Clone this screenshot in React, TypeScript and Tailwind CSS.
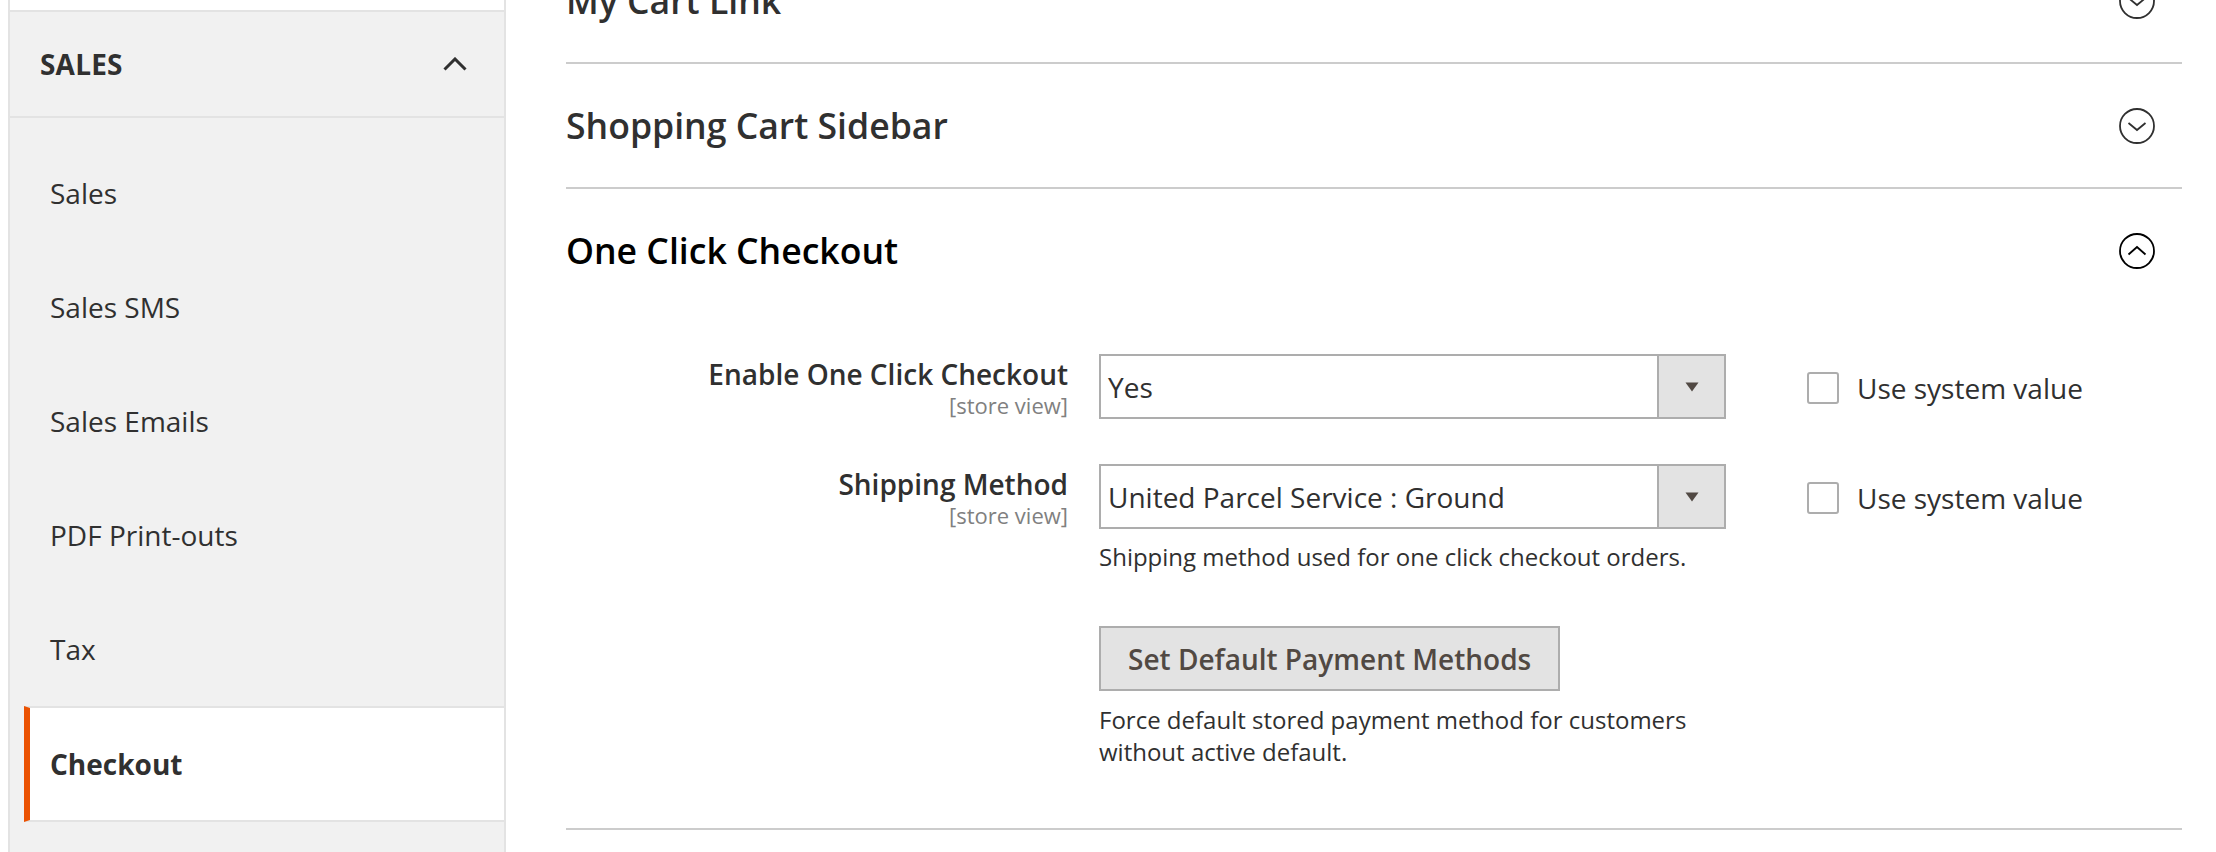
import React from "react";

const navItems = ["Sales", "Sales SMS", "Sales Emails", "PDF Print-outs", "Tax"];

function CircleChevron({ open }: { open?: boolean }) {
  const color = open ? "#000000" : "#303030";
  return (
    <svg width="36" height="36" viewBox="0 0 36 36" fill="none">
      <circle cx="18" cy="18" r="17" stroke={color} strokeWidth="1.8" />
      {open ? (
        <path d="M9.5 21.5 L18 14 L26.5 21.5" stroke={color} strokeWidth="1.8" />
      ) : (
        <path d="M9.5 15 L18 22 L26.5 15" stroke={color} strokeWidth="1.8" />
      )}
    </svg>
  );
}

function SectionHead({ title, open }: { title: string; open?: boolean }) {
  return (
    <div className="h-[123px] flex items-center justify-between pr-[27px]">
      <span className={`text-[35.6px] font-semibold ${open ? "text-black" : "text-[#303030]"}`}>{title}</span>
      <CircleChevron open={open} />
    </div>
  );
}

function SelectBox({ value }: { value: string }) {
  return (
    <div className="w-[627px] h-[65px] flex border-2 border-[#adadad] bg-white">
      <div className="flex-1 flex items-center pl-[7px] text-[28px] text-[#303030]">{value}</div>
      <div className="w-[67px] flex items-center justify-center bg-[#e3e3e3] border-l-2 border-[#adadad]">
        <svg width="14" height="10" viewBox="0 0 14 10">
          <path d="M0.5 0.5 L13.5 0.5 L7 9.5 Z" fill="#514943" />
        </svg>
      </div>
    </div>
  );
}

function UseSystem() {
  return (
    <div className="ml-[81px] mt-[18px] flex items-center">
      <span className="w-[32px] h-[32px] rounded-[3px] border-2 border-[#adadad] bg-white" />
      <span className="ml-[18px] text-[28px] text-[#303030] leading-none">Use system value</span>
    </div>
  );
}

function Label({ text }: { text: string }) {
  return (
    <div className="w-[502px] text-right pt-[2px]">
      <div className="text-[28px] font-semibold text-[#303030] leading-[36px]">{text}</div>
      <div className="text-[22px] text-[#808080] leading-[26px]">[store view]</div>
    </div>
  );
}

export default function App() {
  return (
    <div className="w-[2216px] h-[852px] overflow-hidden bg-white flex font-['Open_Sans',sans-serif]">
      {/* Sidebar */}
      <aside className="ml-[8px] w-[498px] h-full flex flex-col border-x-2 border-[#e3e3e3] bg-[#f1f1f1]">
        <div className="h-[12px] bg-white border-b-2 border-[#e3e3e3]" />
        <div className="h-[104px] flex items-center justify-between pl-[30px] pr-[37px]">
          <span className="text-[28px] font-bold text-[#303030] tracking-[0.2px]">SALES</span>
          <svg width="24" height="14" viewBox="0 0 24 14" fill="none">
            <path d="M1.5 12.5 L12 2 L22.5 12.5" stroke="#303030" strokeWidth="3" />
          </svg>
        </div>
        <div className="border-t-2 border-[#e3e3e3] pt-[18px] flex flex-col">
          {navItems.map((item) => (
            <div key={item} className="h-[114px] flex items-center pl-[40px] text-[28px] text-[#303030]">
              {item}
            </div>
          ))}
          <div className="ml-[14px] h-[116px] flex items-center pl-[20px] bg-white border-l-[6px] border-l-[#eb5202] border-y-2 border-y-[#e3e3e3] text-[28px] font-bold text-[#303030]">
            Checkout
          </div>
        </div>
      </aside>

      {/* Main content */}
      <main className="ml-[60px] w-[1616px]">
        <div className="mt-[-61px] border-b-2 border-[#cccccc]">
          <SectionHead title="My Cart Link" />
        </div>
        <div className="border-b-2 border-[#cccccc]">
          <SectionHead title="Shopping Cart Sidebar" />
        </div>
        <div className="border-b-2 border-[#cccccc]">
          <SectionHead title="One Click Checkout" open />
          <div className="pt-[42px] pb-[60px] flex flex-col">
            <div className="flex items-start">
              <Label text="Enable One Click Checkout" />
              <div className="ml-[31px]">
                <SelectBox value="Yes" />
              </div>
              <UseSystem />
            </div>
            <div className="flex items-start mt-[45px]">
              <Label text="Shipping Method" />
              <div className="ml-[31px] w-[627px]">
                <SelectBox value="United Parcel Service : Ground" />
                <p className="mt-[12px] text-[24px] leading-[32px] text-[#303030]">
                  Shipping method used for one click checkout orders.
                </p>
              </div>
              <UseSystem />
            </div>
            <div className="flex items-start mt-[53px]">
              <div className="w-[502px]" />
              <div className="ml-[31px] w-[627px]">
                <button className="h-[65px] px-[27px] bg-[#e3e3e3] border-2 border-[#adadad] text-[28px] font-semibold text-[#514943]">
                  Set Default Payment Methods
                </button>
                <p className="mt-[13px] text-[24px] leading-[32px] text-[#303030]">
                  Force default stored payment method for customers without active default.
                </p>
              </div>
            </div>
          </div>
        </div>
      </main>
    </div>
  );
}
